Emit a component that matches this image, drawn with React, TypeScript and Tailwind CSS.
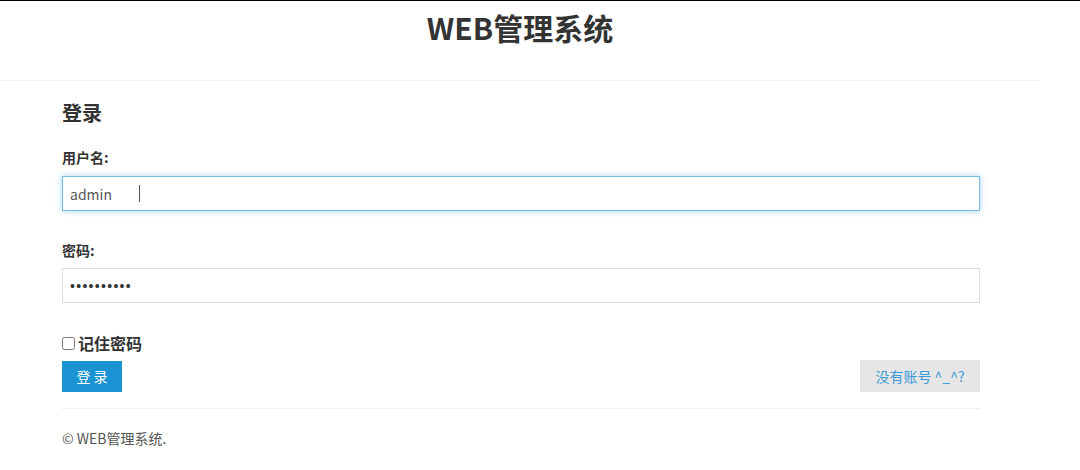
import { useState } from 'react';

const font = "font-['Noto_Sans_CJK_SC','Noto_Sans',sans-serif]";

export default function App() {
  const [username, setUsername] = useState('admin');
  const [password, setPassword] = useState('1234567890');
  const [remember, setRemember] = useState(false);

  return (
    <div className={`min-h-[470px] w-[1080px] bg-white text-[#333] ${font}`}>
      <div className="h-px bg-black" />
      <header className="flex h-[80px] w-[1040px] items-start justify-center border-b border-[#eee]">
        <h1 className="mt-[5px] text-[30px] font-bold leading-[42px] text-[#333]">WEB管理系统</h1>
      </header>

      <main className="ml-[62px] w-[918px]">
        <h3 className="mt-[18px] text-[20px] font-bold leading-[28px]">登录</h3>

        <label className="mt-[20px] block text-[14px] font-bold leading-[20px]">用户名:</label>
        <div className="relative mt-[9px]">
          <input
            value={username}
            onChange={(e) => setUsername(e.target.value)}
            className="h-[35px] w-full border border-[#74bfe0] px-[7px] text-[14px] text-[#555] shadow-[0_0_6px_rgba(102,175,233,0.6)] outline-none"
          />
          <span className="absolute left-[77px] top-[9px] h-[17px] w-px bg-[#555]" />
        </div>

        <label className="mt-[29px] block text-[14px] font-bold leading-[20px]">密码:</label>
        <input
          type="password"
          value={password}
          onChange={(e) => setPassword(e.target.value)}
          className="mt-[8px] h-[35px] w-full border border-[#ddd] px-[7px] font-['Liberation_Sans',Arial,sans-serif] text-[14px] tracking-[1.3px] text-[#333] outline-none"
        />

        <label className="mt-[28px] flex items-center gap-[3px] text-[16px] font-bold leading-[24px]">
          <input
            type="checkbox"
            checked={remember}
            onChange={(e) => setRemember(e.target.checked)}
            className="m-0 h-[13px] w-[13px]"
          />
          记住密码
        </label>

        <div className="mt-[5px] flex items-start justify-between">
          <button className="mt-px h-[31px] w-[60px] bg-[#1b93d3] text-[14px] text-white">登 录</button>
          <button className="h-[32px] w-[120px] bg-[#e6e6e6] text-[14px] text-[#3b9ad8]">没有账号 ^_^?</button>
        </div>

        <hr className="mt-[16px] border-t border-[#eee]" />

        <p className="mt-[19px] text-[14px] leading-[20px] text-[#555]">© WEB管理系统.</p>
      </main>
    </div>
  );
}
